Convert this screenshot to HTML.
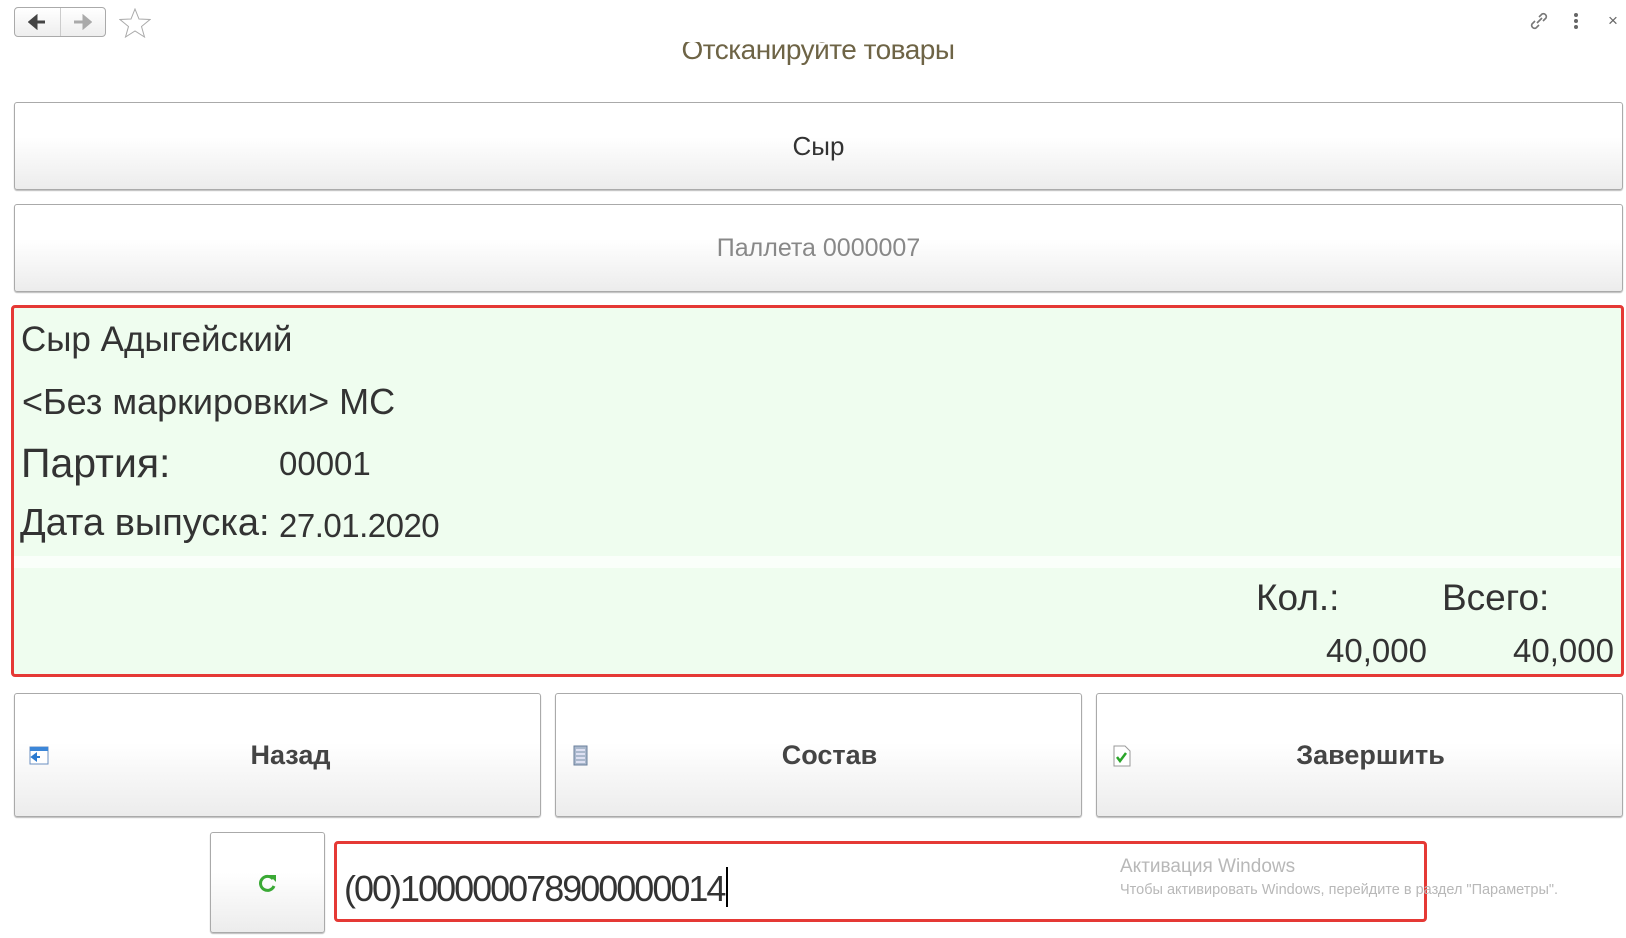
<!DOCTYPE html>
<html><head><meta charset="utf-8"><style>
*{box-sizing:border-box;margin:0;padding:0}
body{width:1626px;height:938px;background:#fff;font-family:"Liberation Sans",sans-serif;position:relative;overflow:hidden;color:#333}
.a{position:absolute}
.btn{position:absolute;border:1px solid #aaa;border-radius:3px;background:linear-gradient(#fff 40%,#ececec);box-shadow:0 1px 1px #bbb}
.c{display:flex;align-items:center;justify-content:center}
.t{position:absolute;white-space:nowrap;line-height:1}
</style></head><body>
<div class="a" style="left:14px;top:7px;width:92px;height:30px;border:1px solid #aaa;border-radius:4px;background:linear-gradient(#fff,#eee)"></div>
<div class="a" style="left:60px;top:8px;width:1px;height:28px;background:#ccc"></div>
<svg class="a" style="left:28px;top:14px" width="20" height="16"><path d="M2 8h15M2 8l6-5v10z" stroke="#444" stroke-width="3" fill="#444"/></svg>
<svg class="a" style="left:72px;top:14px" width="20" height="16"><path d="M2 8h13M18 8l-6-5v10z" stroke="#aaa" stroke-width="3" fill="#aaa"/></svg>
<svg class="a" style="left:119px;top:8px" width="32" height="30"><path d="M16 1l4 10 11 .5-8.5 7 3 10.5-9.5-6-9.5 6 3-10.5-8.5-7 11-.5z" fill="none" stroke="#aaa" stroke-width="1"/></svg>
<svg class="a" style="left:1527px;top:9px" width="24" height="24"><path d="M10 14l5-5M8 12l-3 3a3 3 0 004 4l3-3M16 12l3-3a3 3 0 00-4-4l-3 3" stroke="#777" stroke-width="1.6" fill="none"/></svg>
<div class="a" style="left:1574px;top:13px;width:4px;height:4px;border-radius:2px;background:#666;box-shadow:0 6px 0 #666,0 12px 0 #666"></div>
<div class="t" style="left:1608px;top:12px;font-size:17px;color:#666">×</div>
<div class="a" style="left:0;top:42px;width:1626px;height:30px;overflow:hidden"><div class="t" style="left:0;width:1636px;text-align:center;top:-6px;font-size:28px;color:#6e6446;letter-spacing:-0.5px">Отсканируйте товары</div></div>
<div class="btn c" style="left:14px;top:102px;width:1609px;height:88px;font-size:26px;color:#333">Сыр</div>
<div class="btn c" style="left:14px;top:204px;width:1609px;height:88px;font-size:25px;color:#888">Паллета 0000007</div>
<div class="a" style="left:11px;top:305px;width:1613px;height:372px;border:3px solid #e53935;border-radius:4px;background:#effdef"></div>
<div class="a" style="left:14px;top:556px;width:1607px;height:12px;background:#fafffa"></div>
<div class="t" style="left:21px;top:322px;font-size:35px">Сыр Адыгейский</div>
<div class="t" style="left:22px;top:384px;font-size:36px">&lt;Без маркировки&gt; МС</div>
<div class="t" style="left:21px;top:443px;font-size:41px">Партия:</div>
<div class="t" style="left:279px;top:447px;font-size:33px">00001</div>
<div class="t" style="left:20px;top:504px;font-size:38px">Дата выпуска:</div>
<div class="t" style="left:279px;top:509px;font-size:33px;letter-spacing:-0.5px">27.01.2020</div>
<div class="t" style="left:1256px;top:579px;font-size:37px">Кол.:</div>
<div class="t" style="left:1442px;top:579px;font-size:37px">Всего:</div>
<div class="t" style="left:1326px;top:634px;font-size:33px">40,000</div>
<div class="t" style="left:1513px;top:634px;font-size:33px">40,000</div>
<div class="btn c" style="left:14px;top:693px;width:527px;height:124px;font-size:27px;font-weight:bold;color:#444;padding-left:26px">Назад</div>
<div class="btn c" style="left:555px;top:693px;width:527px;height:124px;font-size:27px;font-weight:bold;color:#444;padding-left:22px">Состав</div>
<div class="btn c" style="left:1096px;top:693px;width:527px;height:124px;font-size:27px;font-weight:bold;color:#444;padding-left:22px">Завершить</div>
<svg class="a" style="left:29px;top:746px" width="20" height="20"><rect x="1" y="1" width="18" height="17" fill="#fff" stroke="#6a8fc0"/><rect x="1" y="1" width="18" height="4" fill="#3b86d8"/><path d="M3 11h8M3 11l4-3v6z" stroke="#2a7ad0" stroke-width="2" fill="#2a7ad0"/></svg>
<svg class="a" style="left:573px;top:745px" width="16" height="22"><rect x="1" y="1" width="13" height="19" fill="#aab8cc" stroke="#6a7f9c"/><path d="M3 5h9M3 9h9M3 13h9M3 17h9" stroke="#eef" stroke-width="1.5"/></svg>
<svg class="a" style="left:1113px;top:745px" width="18" height="22"><path d="M1 1h11l5 5v15H1z" fill="#fff" stroke="#999"/><path d="M4 12l3 4 6-8" stroke="#2aa52a" stroke-width="2.5" fill="none"/></svg>
<div class="btn c" style="left:210px;top:832px;width:115px;height:101px"><svg width="22" height="22"><path d="M16 7a7 7 0 10 1 7" stroke="#3aa935" stroke-width="3" fill="none"/><path d="M12 3l7 0 0 7z" fill="#3aa935"/></svg></div>
<div class="a" style="left:334px;top:841px;width:1093px;height:81px;border:3px solid #e53935;border-radius:4px;background:#fff"></div>
<div class="t" style="left:344px;top:867px;font-size:36px;color:#333;letter-spacing:-2px">(00)100000078900000014<span style="display:inline-block;width:2px;height:40px;background:#000;vertical-align:-6px;margin-left:2px"></span></div>
<div class="t" style="left:1120px;top:857px;font-size:19px;color:#b8b8b8">Активация Windows</div>
<div class="t" style="left:1120px;top:883px;font-size:14.5px;color:#b8b8b8">Чтобы активировать Windows, перейдите в раздел "Параметры".</div>
</body></html>
